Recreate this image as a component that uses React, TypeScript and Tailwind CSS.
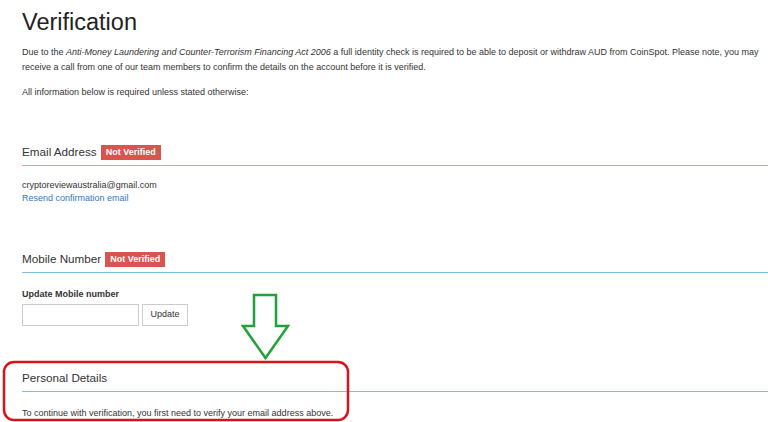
import React from "react";

function Badge() {
  return (
    <span className="ml-[4px] inline-block bg-[#d9534f] px-[5px] pt-[2px] pb-[3px] text-[9px] font-bold leading-[10px] text-white">
      Not Verified
    </span>
  );
}

function SectionHead({ title, badge }: { title: string; badge?: boolean }) {
  return (
    <div className="flex items-center border-b border-[#7cc0dc] pb-[5px] text-[11.7px] leading-[16px] text-[#333]">
      <span>{title}</span>
      {badge && <Badge />}
    </div>
  );
}

export default function App() {
  return (
    <div className="relative h-[422px] w-[768px] overflow-hidden bg-white font-['Liberation_Sans',Arial,sans-serif] text-[#333]">
      <div className="pl-[22px]">
        <h1 className="pt-[7px] text-[23.5px] leading-[30px] text-[#222]">Verification</h1>
        <p className="mt-[8px] pr-[4px] text-[9px] leading-[15px]">
          Due to the <i>Anti-Money Laundering and Counter-Terrorism Financing Act 2006</i> a full identity check is
          required to be able to deposit or withdraw AUD from CoinSpot. Please note, you may receive a call from one
          of our team members to confirm the details on the account before it is verified.
        </p>
        <p className="mt-[10px] text-[9px] leading-[15px]">All information below is required unless stated otherwise:</p>

        <div className="mt-[44px]">
          <SectionHead title="Email Address" badge />
          <div className="mt-[13px] text-[9px] leading-[13px]">
            <div>cryptoreviewaustralia@gmail.com</div>
            <a className="text-[#337ab7]">Resend confirmation email</a>
          </div>
        </div>

        <div className="mt-[46px]">
          <SectionHead title="Mobile Number" badge />
          <div className="mt-[15px] text-[9px] font-bold leading-[12px]">Update Mobile number</div>
          <div className="mt-[4px] flex gap-[3px]">
            <input className="h-[22px] w-[117px] border border-[#ccc] bg-white" />
            <button className="h-[22px] w-[46px] border border-[#ccc] bg-white text-[9px] text-[#333]">Update</button>
          </div>
        </div>

        <div className="mt-[44px]">
          <SectionHead title="Personal Details" />
          <p className="mt-[15px] text-[9px] leading-[13px]">
            To continue with verification, you first need to verify your email address above.
          </p>
        </div>
      </div>

      <svg className="absolute left-0 top-0" width="768" height="422" viewBox="0 0 768 422" fill="none">
        <path
          d="M254 295 H276 V326 H288 L265.5 358 L243 326 H254 Z"
          stroke="#22a03a"
          strokeWidth="2.5"
          strokeLinejoin="miter"
        />
        <rect x="4" y="362" width="344" height="58" rx="10" stroke="#d7141c" strokeWidth="2.5" />
      </svg>
    </div>
  );
}
